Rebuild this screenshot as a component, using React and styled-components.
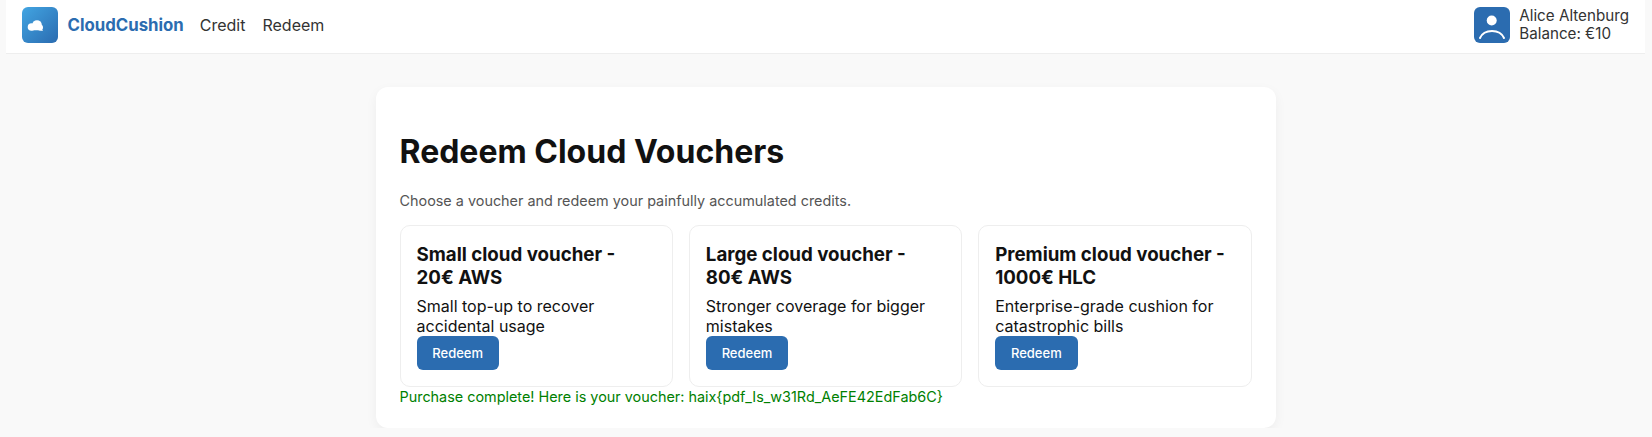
import styled, { createGlobalStyle } from "styled-components";

const GlobalStyle = createGlobalStyle`
  * {
    box-sizing: border-box;
  }
  body {
    margin: 0 7px 0 6px;
    background: #f9f9f9;
    font-family: Inter, "Liberation Sans", sans-serif;
    color: #111111;
  }
`;

const NavBar = styled.nav`
  height: 54px;
  padding: 7px 16px 10px;
  background: #ffffff;
  border-bottom: 1px solid #eeeeee;
  display: flex;
  align-items: center;
  justify-content: space-between;
`;

const NavLeft = styled.div`
  display: flex;
  align-items: center;
`;

const LogoBox = styled.div`
  width: 36px;
  height: 36px;
  border-radius: 6px;
  background: linear-gradient(135deg, #42a5e2, #2a6bb0);
  margin-right: 9.5px;
`;

const Brand = styled.span`
  font-size: 16.8px;
  font-weight: 700;
  color: #2b6cb0;
  margin-right: 16px;
`;

const NavLink = styled.a`
  font-size: 16px;
  color: #333333;
  margin-right: 17px;
`;

const UserBlock = styled.div`
  display: flex;
  align-items: center;
  gap: 9px;
`;

const Avatar = styled.div`
  width: 36px;
  height: 36px;
  border-radius: 6px;
  background: #2b6cb0;
`;

const UserText = styled.div`
  font-size: 15.2px;
  line-height: 18px;
  color: #333333;
`;

const Main = styled.main`
  width: 900px;
  margin: 33px auto 0;
  padding: 24px 24px 22px;
  background: #ffffff;
  border-radius: 12px;
  box-shadow: 0 4px 12px rgba(0, 0, 0, 0.05);
`;

const Title = styled.h1`
  font-size: 32px;
  line-height: 39px;
  font-weight: 700;
  margin: 21px 0 21px;
`;

const Lead = styled.p`
  font-size: 14.4px;
  line-height: 17px;
  color: #555555;
  margin: 0 0 16px;
`;

const CardGrid = styled.div`
  display: grid;
  grid-template-columns: repeat(3, 1fr);
  gap: 16px;
`;

const Card = styled.div`
  height: 162px;
  padding: 16px;
  border: 1px solid #eeeeee;
  border-radius: 10px;
`;

const CardTitle = styled.h3`
  font-size: 18.72px;
  line-height: 23px;
  font-weight: 700;
  margin: 1px 0 7px;
`;

const CardText = styled.p`
  font-size: 16px;
  line-height: 20px;
  margin: 0;
`;

const RedeemButton = styled.button`
  display: block;
  height: 34px;
  padding: 0 15.8px;
  border: none;
  border-radius: 6px;
  background: #2b6cb0;
  color: #ffffff;
  font-family: inherit;
  font-size: 13px;
  font-weight: 500;
`;

const Success = styled.div`
  font-size: 14.4px;
  line-height: 18px;
  margin-top: 1px;
  color: #008000;
`;

const vouchers = [
  { name: "Small cloud voucher - 20€ AWS", text: "Small top-up to recover accidental usage" },
  { name: "Large cloud voucher - 80€ AWS", text: "Stronger coverage for bigger mistakes" },
  { name: "Premium cloud voucher - 1000€ HLC", text: "Enterprise-grade cushion for catastrophic bills" },
];

export default function App() {
  return (
    <>
      <GlobalStyle />
      <NavBar>
        <NavLeft>
          <LogoBox>
            <svg width="36" height="36" viewBox="0 0 36 36" fill="#fff">
              <circle cx="9.500" cy="20" r="3.800" />
              <circle cx="15" cy="18" r="4.800" />
              <circle cx="18" cy="20.500" r="3" />
              <path d="M9.500 19h8.500l3 5-4-.8h-7.500z" />
            </svg>
          </LogoBox>
          <Brand>CloudCushion</Brand>
          <NavLink>Credit</NavLink>
          <NavLink>Redeem</NavLink>
        </NavLeft>
        <UserBlock>
          <Avatar>
            <svg width="36" height="36" viewBox="0 0 36 36" fill="none">
              <circle cx="17.700" cy="13.500" r="5" fill="#fff" />
              <path d="M6 31c2-4.500 6.500-7 12-7s10 2.500 12 7" stroke="#fff" strokeWidth="2" strokeLinecap="round" />
            </svg>
          </Avatar>
          <UserText>
            Alice Altenburg
            <br />
            Balance: €10
          </UserText>
        </UserBlock>
      </NavBar>
      <Main>
        <Title>Redeem Cloud Vouchers</Title>
        <Lead>Choose a voucher and redeem your painfully accumulated credits.</Lead>
        <CardGrid>
          {vouchers.map((v) => (
            <Card key={v.name}>
              <CardTitle>{v.name}</CardTitle>
              <CardText>{v.text}</CardText>
              <RedeemButton>Redeem</RedeemButton>
            </Card>
          ))}
        </CardGrid>
        <Success>Purchase complete! Here is your voucher: haix{"{"}pdf_Is_w31Rd_AeFE42EdFab6C{"}"}</Success>
      </Main>
    </>
  );
}
